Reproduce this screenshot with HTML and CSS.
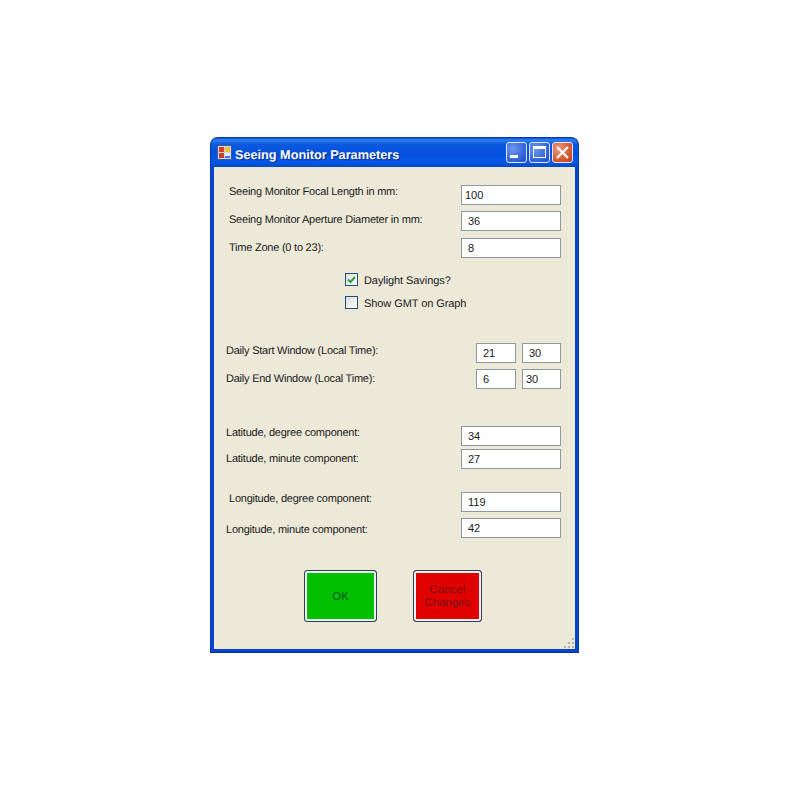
FILE: index.html
```html
<!DOCTYPE html>
<html lang="en">
<head>
    <meta charset="UTF-8">
    <title>Seeing Monitor Parameters</title>
    <link rel="stylesheet" href="styles.css">
</head>
<body>

<div class="window">
    <div class="titlebar">
        <svg class="app-icon" width="16" height="16" viewBox="0 0 16 16">
            <rect x="0.5" y="0.5" width="14" height="14" fill="#c9d6ea" stroke="#3c5a9c"/>
            <rect x="2" y="2" width="5" height="5" fill="#d8402a"/>
            <rect x="8" y="2" width="5" height="5" fill="#f2c230"/>
            <rect x="2" y="8" width="5" height="5" fill="#c8402a"/>
            <rect x="8" y="8" width="5" height="5" fill="#e8eef8"/>
            <rect x="8" y="11" width="5" height="2" fill="#4a78c8"/>
        </svg>
        <span class="title">Seeing Monitor Parameters</span>
        <div class="controls">
            <div class="ctl ctl-blue">
                <svg width="19" height="19" viewBox="0 0 19 19"><rect x="3" y="12" width="8" height="3" fill="#fff"/></svg>
            </div>
            <div class="ctl ctl-blue">
                <svg width="19" height="19" viewBox="0 0 19 19"><rect x="3.5" y="3.5" width="12" height="11" fill="none" stroke="#fff"/><rect x="3" y="3" width="13" height="3" fill="#fff"/></svg>
            </div>
            <div class="ctl ctl-red">
                <svg width="19" height="19" viewBox="0 0 19 19"><path d="M4 4L15 15M15 4L4 15" stroke="#fff" stroke-width="2.2" fill="none"/></svg>
            </div>
        </div>
    </div>

    <div class="client">
        <!-- Monitor -->
        <div class="row row-first">
            <label class="lbl up1">Seeing Monitor Focal Length in mm:</label>
            <input class="field" type="text" value="100">
        </div>
        <div class="row gap6">
            <label class="lbl dn1">Seeing Monitor Aperture Diameter in mm:</label>
            <input class="field pad-wide" type="text" value="36">
        </div>
        <div class="row gap7">
            <label class="lbl dn2">Time Zone (0 to 23):</label>
            <input class="field pad-wide" type="text" value="8">
        </div>

        <div class="checks">
            <div class="check">
                <span class="box">
                    <svg width="11" height="11" viewBox="0 0 11 11"><path d="M2 5.5L4.5 8L9 3" stroke="#2f9e44" stroke-width="2" fill="none"/></svg>
                </span>
                <span>Daylight Savings?</span>
            </div>
            <div class="check">
                <span class="box"></span>
                <span>Show GMT on Graph</span>
            </div>
        </div>

        <!-- Daily window -->
        <div class="row row-short window-start">
            <label class="lbl">Daily Start Window (Local Time):</label>
            <input class="field small" type="text" value="21">
            <input class="field small small-end" type="text" value="30">
        </div>
        <div class="row row-short gap6">
            <label class="lbl dn2">Daily End Window (Local Time):</label>
            <input class="field small" type="text" value="6">
            <input class="field small small-end pad-none" type="text" value="30">
        </div>

        <!-- Position -->
        <div class="row row-short lat-start">
            <label class="lbl up1">Latitude, degree component:</label>
            <input class="field pad-wide" type="text" value="34">
        </div>
        <div class="row row-short gap3">
            <label class="lbl dn2">Latitude, minute component:</label>
            <input class="field pad-wide" type="text" value="27">
        </div>
        <div class="row lon-start">
            <label class="lbl up1">Longitude, degree component:</label>
            <input class="field pad-wide" type="text" value="119">
        </div>
        <div class="row row-short gap6">
            <label class="lbl dn4">Longitude, minute component:</label>
            <input class="field pad-wide" type="text" value="42">
        </div>

        <div class="buttons">
            <button class="btn btn-ok">OK</button>
            <button class="btn btn-cancel">Cancel<br>Changes</button>
        </div>

        <svg class="grip" width="12" height="12" viewBox="0 0 12 12">
            <g fill="#b5b2a3">
                <rect x="9" y="1" width="2" height="2"/>
                <rect x="5" y="5" width="2" height="2"/><rect x="9" y="5" width="2" height="2"/>
                <rect x="1" y="9" width="2" height="2"/><rect x="5" y="9" width="2" height="2"/><rect x="9" y="9" width="2" height="2"/>
            </g>
        </svg>
    </div>
</div>

</body>
</html>
```

FILE: styles.css
```css
body {
    margin: 0;
    background-color: #fff;
    font-family: "Liberation Sans", Arial, sans-serif;
    font-size: 11px;
    text-rendering: geometricPrecision;
    color: #1a1a1a;
}
.window {
    box-sizing: border-box;
    width: 369px;
    height: 516px;
    margin: 137px 0 0 210px;
    padding: 0 3px 3px;
    background: #0845c8;
    border: 1px solid #0a3ab0;
    border-bottom-color: #0931a0;
    border-radius: 8px 8px 0 0;
    display: flex;
    flex-direction: column;
}
.titlebar {
    height: 29px;
    margin: 0 -3px;
    padding: 0 5px 0 6px;
    flex-shrink: 0;
    display: flex;
    align-items: center;
    border-radius: 7px 7px 0 0;
    background: linear-gradient(to bottom, #0a50d0 0, #2f80f0 2px, #0d5ae0 6px, #0450dc 16px, #0758e8 24px, #0648c8 29px);
}
.app-icon {
    flex-shrink: 0;
}
.title {
    margin-left: 2px;
    padding-top: 5px;
    flex: 1;
    color: #fff;
    font-size: 12.7px;
    font-weight: bold;
    text-shadow: 1px 1px 1px #0a2f90;
}
.controls {
    display: flex;
    gap: 2px;
}
.ctl {
    box-sizing: border-box;
    width: 21px;
    height: 21px;
    border: 1px solid #dfe8fa;
    border-radius: 3px;
    overflow: hidden;
}
.ctl-blue {
    background: radial-gradient(circle at 30% 30%, #6f97ee, #2d5fd6 70%, #2450c0);
}
.ctl-red {
    background: radial-gradient(circle at 30% 30%, #ec9a80, #d95a32 60%, #c23c18);
}
.client {
    position: relative;
    flex: 1;
    background-color: #ece9d8;
}
.row {
    display: flex;
    padding-left: 15px;
    padding-right: 14px;
    height: 20px;
}
.row-short {
    padding-left: 12px;
}
.row-first {
    margin-top: 18px;
}
.gap3 {
    margin-top: 3px;
}
.gap6 {
    margin-top: 6px;
}
.gap7 {
    margin-top: 7px;
}
.window-start {
    margin-top: 34px;
}
.lat-start {
    margin-top: 37px;
}
.lon-start {
    margin-top: 23px;
}
.lbl {
    flex: 1;
    line-height: 16px;
    letter-spacing: -0.23px;
}
.up1 {
    margin-top: -1px;
}
.dn1 {
    margin-top: 1px;
}
.dn2 {
    margin-top: 2px;
}
.dn4 {
    margin-top: 4px;
}
.field {
    box-sizing: border-box;
    width: 100px;
    height: 20px;
    margin: 0;
    padding: 0 3px;
    border: 1px solid #8c9a9e;
    background-color: #fff;
    font-family: inherit;
    font-size: 11px;
    color: #1a1a1a;
    outline: none;
}
.pad-wide {
    padding-left: 6px;
}
.small {
    width: 40px;
    padding-left: 6px;
    margin-left: 6px;
}
.small-end {
    width: 39px;
}
.pad-none {
    padding-left: 3px;
}
.checks {
    margin: 15px 0 0 131px;
    display: flex;
    flex-direction: column;
    gap: 10px;
}
.check {
    display: flex;
    align-items: center;
    gap: 6px;
    height: 13px;
    line-height: 15px;
    letter-spacing: -0.08px;
}
.check span:last-child {
    padding-top: 3px;
}
.box {
    box-sizing: border-box;
    width: 13px;
    height: 13px;
    border: 1px solid #1c5180;
    background: linear-gradient(135deg, #dcdcd7, #fff);
    display: flex;
    align-items: center;
    justify-content: center;
}
.buttons {
    margin: 32px 0 0 90px;
    display: flex;
    gap: 36px;
}
.btn {
    box-sizing: border-box;
    width: 73px;
    height: 52px;
    padding: 0;
    border: 1px solid #2b3f55;
    outline: none;
    border-radius: 3px;
    font-family: inherit;
    font-size: 11.5px;
    line-height: 13px;
    box-shadow: inset 0 0 0 2px #eef0f2;
}
.btn-ok {
    background-color: #00c000;
    color: #0a5a20;
}
.btn-cancel {
    width: 69px;
    background-color: #e00000;
    color: #7a1010;
}
.grip {
    position: absolute;
    right: 0;
    bottom: 0;
}
```
